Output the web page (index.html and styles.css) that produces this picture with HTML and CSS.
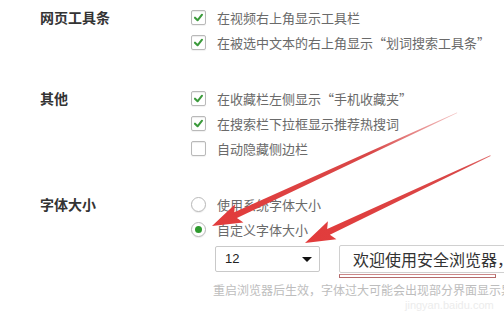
FILE: index.html
```html
<!DOCTYPE html>
<html>
<head>
    <meta charset="UTF-8">
    <title>设置</title>
    <link rel="stylesheet" href="styles.css">
</head>
<body>
    <div class="page">
        <div class="section">
            <div class="section-label">网页工具条</div>
            <div class="options">
                <div class="option"><span class="check on"><svg viewBox="0 0 14 14"><path d="M3.2 7.2 L6 10 L10.8 4" /></svg></span>在视频右上角显示工具栏</div>
                <div class="option"><span class="check on"><svg viewBox="0 0 14 14"><path d="M3.2 7.2 L6 10 L10.8 4" /></svg></span>在被选中文本的右上角显示“划词搜索工具条”</div>
            </div>
        </div>

        <div class="section">
            <div class="section-label">其他</div>
            <div class="options">
                <div class="option"><span class="check on"><svg viewBox="0 0 14 14"><path d="M3.2 7.2 L6 10 L10.8 4" /></svg></span>在收藏栏左侧显示“手机收藏夹”</div>
                <div class="option"><span class="check on"><svg viewBox="0 0 14 14"><path d="M3.2 7.2 L6 10 L10.8 4" /></svg></span>在搜索栏下拉框显示推荐热搜词</div>
                <div class="option"><span class="check"></span>自动隐藏侧边栏</div>
            </div>
        </div>

        <div class="section last">
            <div class="section-label">字体大小</div>
            <div class="options">
                <div class="option"><span class="radio"></span>使用系统字体大小</div>
                <div class="option"><span class="radio on"></span>自定义字体大小</div>
                <div class="font-row">
                    <div class="select">12<span class="caret"></span></div>
                    <div class="preview">欢迎使用安全浏览器，</div>
                </div>
                <div class="hint">重启浏览器后生效，字体过大可能会出现部分界面显示异常</div>
            </div>
        </div>

        <div class="watermark">jingyan.baidu.com</div>
        <div class="edge"></div>
    </div>

    <!-- annotation arrows drawn over the page -->
    <svg class="arrows" width="504" height="316" viewBox="0 0 504 316">
        <defs>
            <linearGradient id="fade" gradientUnits="userSpaceOnUse" x1="-270" y1="0" x2="0" y2="0">
                <stop offset="0" stop-color="#f3c4c4" />
                <stop offset="0.35" stop-color="#d94848" />
                <stop offset="1" stop-color="#e23b3b" />
            </linearGradient>
        </defs>
        <g transform="translate(212 226) rotate(155.2)">
            <polygon fill="url(#fade)" points="-270,-0.4 -26,-3.2 -30,-10 0,0 -30,10 -26,3.2 -270,0.4" />
        </g>
        <g transform="translate(305 243) rotate(154.8)">
            <polygon fill="url(#fade)" points="-205,-0.4 -26,-3.2 -30,-10 0,0 -30,10 -26,3.2 -205,0.4" />
        </g>
    </svg>
</body>
</html>
```

FILE: styles.css
```css
html, body {
    margin: 0;
    padding: 0;
    background-color: #fff;
    overflow: hidden;
}
body {
    font-family: "Microsoft YaHei", "Noto Sans CJK SC", sans-serif;
    width: 504px;
    height: 316px;
    position: relative;
}
.page {
    padding-top: 5px;
    width: 504px;
}
.section {
    display: grid;
    grid-template-columns: 191px 1fr;
    margin-bottom: 31px;
}
.section.last {
    margin-bottom: 0;
}
.section-label {
    padding-left: 40px;
    height: 25px;
    line-height: 25px;
    font-size: 14px;
    font-weight: bold;
    color: #333;
}
.options {
    display: flex;
    flex-direction: column;
    min-width: 0;
}
.option {
    display: flex;
    align-items: center;
    height: 25px;
    font-size: 13px;
    color: #6a6a6a;
    white-space: nowrap;
}
.check {
    width: 13px;
    height: 13px;
    border: 1px solid #b9b9b9;
    border-radius: 2px;
    background-color: #fff;
    box-shadow: inset 0 1px 1px rgba(0,0,0,0.08), 0 1px 1px rgba(0,0,0,0.06);
    margin-right: 11px;
    flex-shrink: 0;
}
.check svg {
    display: block;
    width: 13px;
    height: 13px;
}
.check path {
    fill: none;
    stroke: #3b9a3b;
    stroke-width: 2.2;
    stroke-linecap: round;
    stroke-linejoin: round;
}
.radio {
    width: 13px;
    height: 13px;
    border: 1px solid #b9b9b9;
    border-radius: 50%;
    background-color: #fff;
    box-shadow: 0 1px 1px rgba(0,0,0,0.08);
    margin-right: 11px;
    flex-shrink: 0;
    display: flex;
    align-items: center;
    justify-content: center;
}
.radio.on::after {
    content: "";
    width: 7px;
    height: 7px;
    border-radius: 50%;
    background-color: #2e9a2e;
}
.font-row {
    display: flex;
    align-items: center;
    margin-top: 3px;
    margin-left: 24px;
    gap: 19px;
}
.select {
    box-sizing: border-box;
    width: 105px;
    height: 26px;
    flex-shrink: 0;
    border: 1px solid #c9c9c9;
    border-radius: 2px;
    padding-left: 9px;
    padding-right: 7px;
    font-size: 13px;
    line-height: 24px;
    color: #222;
    font-family: Arial, "Liberation Sans", sans-serif;
    display: flex;
    align-items: center;
    justify-content: space-between;
}
.caret {
    width: 0;
    height: 0;
    border-left: 5px solid transparent;
    border-right: 5px solid transparent;
    border-top: 5px solid #111;
}
.preview {
    position: relative;
    box-sizing: border-box;
    width: 180px;
    height: 28px;
    border: 1px solid #d0d0d0;
    border-radius: 2px;
    padding-left: 13px;
    font-size: 16px;
    line-height: 26px;
    color: #333;
    white-space: nowrap;
    flex-shrink: 0;
}
.preview::after {
    content: "";
    position: absolute;
    left: -1px;
    top: 28px;
    width: 155px;
    height: 2px;
    border: 1px solid #b46a6a;
    border-top-color: #c88;
}
.hint {
    margin-top: 9px;
    margin-left: 22px;
    font-size: 12px;
    line-height: 16px;
    color: #bdbdbd;
    white-space: nowrap;
}
.watermark {
    margin-left: 405px;
    margin-top: 1px;
    font-family: Arial, "Liberation Sans", sans-serif;
    font-size: 11px;
    line-height: 12px;
    color: #ececec;
}
.edge {
    margin-top: 5px;
    height: 3px;
    background-color: #111;
}
.arrows {
    position: absolute;
    left: 0;
    top: 0;
    pointer-events: none;
}
```
